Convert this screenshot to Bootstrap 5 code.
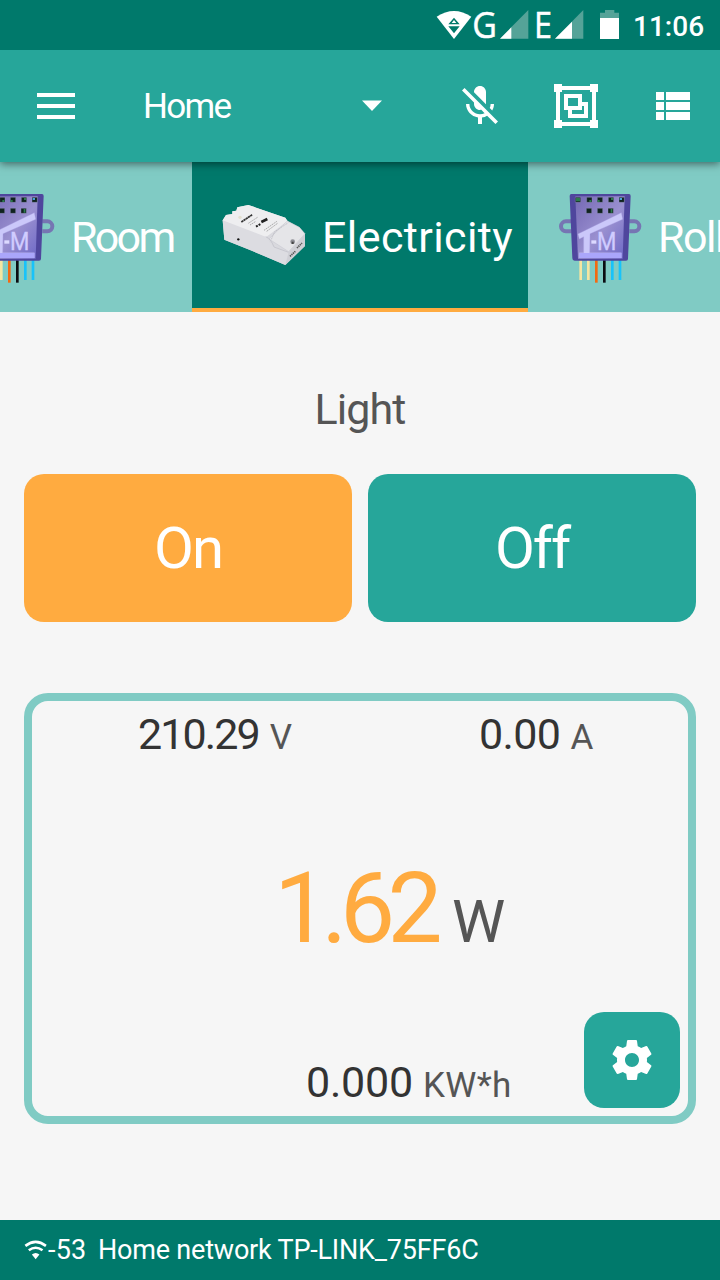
<!DOCTYPE html>
<html lang="en">
<head>
<meta charset="utf-8">
<meta name="viewport" content="width=device-width, initial-scale=1">
<title>Home</title>
<link href="https://cdn.jsdelivr.net/npm/bootstrap@5.3.0/dist/css/bootstrap.min.css" rel="stylesheet">
<style>
:root{--teal:#26a69a;--teal-dark:#00796b;--teal-light:#80cbc4;--amber:#ffab40}
body{width:720px;height:1280px;background:#f6f6f6;font-family:Roboto,"Open Sans",sans-serif;overflow:hidden;color:#555}
svg{display:block;flex:none}
.statusbar{height:50px;background:var(--teal-dark);z-index:3}
.clock{font-size:28px;font-weight:500;line-height:53px;letter-spacing:0;margin-left:13px;width:87px}
.appbar{height:112px;background:var(--teal);box-shadow:0 2px 8px rgba(0,0,0,.5);z-index:2;padding-left:37px}
.place{font-size:35px;line-height:112px;padding-top:2px;width:218px;margin-left:68px;letter-spacing:-1.7px}
.tabs{height:150px;background:var(--teal-light);font-size:43px;line-height:150px}
.tabs .tab-item{color:#fff;height:150px;overflow:hidden;white-space:nowrap;letter-spacing:-2.7px}
.tabs .tab-on{width:336px;background:var(--teal-dark);border-bottom:4px solid var(--amber);padding:4px 0 0 28px;letter-spacing:.4px}
.tab-side{width:192px}
.title{font-size:43px;line-height:60px;padding:67px 0 35px;margin:0;font-weight:400;letter-spacing:-.9px}
.btn.cmd{height:148px;border:0;border-radius:20px;color:#fff;font-size:58px;line-height:148px;padding:0;letter-spacing:-2px}
.btn.bg-amber{background:var(--amber)}
.btn.bg-teal{background:var(--teal)}
.meter{height:431px;margin-top:71px;border:8px solid var(--teal-light);border-radius:24px}
.val{font-size:43px;line-height:60px;color:#333;white-space:nowrap}
.val-v{letter-spacing:-1.9px}
.unit{font-size:35px;line-height:0;color:#555;letter-spacing:.3px;margin-left:10px}
.power{font-size:98px;line-height:120px;color:var(--amber);letter-spacing:-7.5px;padding-left:242px;margin-top:85px}
.power .unit{font-size:60px;margin-left:17px}
.gear{width:96px;height:96px;border-radius:20px;right:8px;bottom:8px}
.netbar{height:60px;background:var(--teal-dark);font-size:27px;line-height:60px;padding-left:24px;letter-spacing:-.2px;white-space:pre}
</style>
</head>
<body class="d-flex flex-column">
<svg width="0" height="0" class="position-absolute">
  <defs>
    <linearGradient id="shell" x1="0" y1="0" x2="1" y2="1"><stop offset="0" stop-color="#7468b4"/><stop offset=".55" stop-color="#9a90d0"/><stop offset="1" stop-color="#6d68c6"/></linearGradient>
    <symbol id="module" viewBox="54 96 252 276">
      <path d="M95 184H78a15 15 0 0 0 0 30H95M268 184h15a15 15 0 0 1 0 30h-15" fill="none" stroke="#7675b3" stroke-width="12"/>
      <g fill="none" stroke-width="8"><path d="M122 300v60M145 300v60" stroke="#f5e5a0"/><path d="M169 300v68" stroke="#f26a12"/><path d="M193 300v68" stroke="#0b0d12"/><path d="M217 300v60M240 300v60" stroke="#18c3fa"/></g>
      <path d="M94 102H267q5 0 5 6L264 296q0 6-6 6H104q-7 0-7-7L89 108q0-6 5-6z" fill="#4f469d"/>
      <path d="M106 109H254L248 296H114z" fill="url(#shell)"/>
      <g fill="#10231f" stroke="#a5a0cf" stroke-width="1"><path d="M106 112h16v15h-16zM140 112h16v15h-16zM172 112h16v15h-16zM205 112h16v15h-16zM237 112h16v15h-16zM139 145h16v15h-16zM172 145h16v15h-16zM204 145h16v15h-16z"/></g>
      <path d="M108 114h12v10h-12zM148 120h6v6h-6zM173 120h6v6h-6zM213 114h6v6h-6zM212 147h5v11h-5z" fill="#2c7a4c"/>
      <path d="M239 114h7v6h-7z" fill="#4aa3d8"/>
      <path d="M114 222 244 158 248 178 150 221 149 278H244V294H118V278H131V230L118 237z" fill="#cbc8fa" stroke="#b0a8ea" stroke-width="1"/>
      <path d="M118 279H244V294H118z" fill="#aaa6fb"/>
      <path d="M154 241h15v10h-15z" fill="#dcd9ff"/>
      <text x="171" y="270" font-size="77" textLength="58" lengthAdjust="spacingAndGlyphs" fill="#d0ccff" stroke="#d0ccff" style="letter-spacing:0">M</text>
    </symbol>
  </defs>
</svg>

<header class="statusbar d-flex align-items-start justify-content-end text-white position-relative">
  <svg width="190" height="50" viewBox="0 0 570 150">
    <path d="M20 50Q72 16 124 50L72 117z" fill="#fff"/>
    <path d="M55 73 72 53 89 73zM55 79H89L72 100z" fill="#00796b"/><path d="M65 69 72 60 79 69z" fill="#fff"/>
    <text x="127" y="113" font-family="Open Sans,Noto Sans" font-size="108" textLength="74" lengthAdjust="spacingAndGlyphs" fill="#fff" stroke="#fff" stroke-width="1.500">G</text>
    <path d="M210 116 295 30V116z" fill="#55a398"/><path d="M210 116 244 82V116z" fill="#fff"/>
    <text x="312" y="113" font-family="Open Sans,Noto Sans" font-size="108" textLength="54" lengthAdjust="spacingAndGlyphs" fill="#fff" stroke="#fff" stroke-width="1.500">E</text>
    <path d="M375 116 460 30V116z" fill="#55a398"/><path d="M375 116 426 65V116z" fill="#fff"/>
    <path d="M525 30h28v8h14v16H510V38h15z" fill="#55a398"/><path d="M510 54h57v63h-57z" fill="#fff"/>
  </svg>
  <div class="clock">11:06</div>
</header>

<nav class="appbar d-flex align-items-center position-relative text-white">
  <svg width="38" height="26" viewBox="0 0 38 26" fill="#fff"><path d="M0 0h38v4H0zM0 11h38v4H0zM0 22h38v4H0z"/></svg>
  <div class="place">Home</div>
  <svg width="22" height="12" viewBox="0 0 22 12" fill="#fff"><path d="M0 .5h20L10 11z" transform="translate(1)"/></svg>
  <svg class="ms-auto" width="48" height="48" viewBox="0 0 24 24" fill="#fff"><path d="M19 11h-1.700c0 .74-.16 1.430-.43 2.050l1.230 1.230c.56-.98.9-2.090.9-3.280zm-4.020.17c0-.06.02-.11.02-.17V5c0-1.660-1.340-3-3-3S9 3.340 9 5v.18l5.980 5.990zM4.270 3L3 4.270l6.010 6.010V11c0 1.660 1.330 3 2.990 3 .22 0 .44-.03.65-.08l1.660 1.660c-.71.33-1.500.52-2.310.52-2.760 0-5.300-2.100-5.300-5.100H5c0 3.410 2.720 6.230 6 6.720V21h2v-3.280c.91-.13 1.770-.45 2.540-.9L19.730 21 21 19.730 4.270 3z"/></svg>
  <svg style="margin:0 58px 0 50px" width="44" height="44" viewBox="0 0 44 44"><path d="M4 4h36v36H4z" fill="none" stroke="#fff" stroke-width="4"/><path d="M0 0h8v8H0zM36 0h8v8h-8zM0 36h8v8H0zM36 36h8v8h-8z" fill="#fff"/><path d="M12 12h14v12H12zM28 20h4v12H16V26" fill="none" stroke="#fff" stroke-width="4"/></svg>
  <svg style="margin-right:30px" width="34" height="28" viewBox="0 0 34 28" fill="#fff"><path d="M0 0h8v8H0zM10 0h24v8H10zM0 10h8v8H0zM10 10h24v8H10zM0 20h8v8H0zM10 20h24v8H10z"/></svg>
</nav>

<div class="tabs d-flex">
  <div class="tab-item tab-side d-flex align-items-center">
    <svg width="84" height="92" style="margin:2px 0 0 -29px"><use href="#module"/></svg>
    <span style="margin-left:16px">Room</span>
  </div>
  <div class="tab-item tab-on d-flex align-items-center">
    <svg width="88" height="68" viewBox="60 72 264 204">
      <path d="M68 124 78 108 97 105 97 97 109 95 112 85 145 78 256 116 263 127 298 145 315 166V201L256 258 150 213 73 182z" fill="#d9d9de"/>
      <path d="M68 124 78 108 97 105 97 97 109 95 112 85 145 78 256 116 262 126 220 158 197 175 70 128z" fill="#eeeef0"/>
      <path d="M262 126 298 145 315 164 266 218 207 180z" fill="#e5e5e8" stroke="#c5c5ce" stroke-width="1.500"/>
      <path d="M68 124 197 173 217 199 266 220 256 258 150 213 73 182z" fill="#dcdce1"/>
      <path d="M197 173Q213 179 222 204L266 220" fill="none" stroke="#bdbdc6" stroke-width="2"/>
      <path d="M266 220 315 166V201L256 258z" fill="#cfcfd5"/>
      <path d="M124 129 157 107" stroke="#333" stroke-width="5" stroke-dasharray="7 1"/>
      <path d="M184 129 202 120" stroke="#222" stroke-width="8"/>
      <path d="M145 133 174 114M150 138 166 128M192 154 232 126M200 157 234 132" stroke="#888" stroke-width="2" stroke-dasharray="5 2"/>
      <path d="M168 143 182 135" stroke="#222" stroke-width="6" stroke-dasharray="6 3"/>
      <path d="M214 181 224 158 265 131" fill="none" stroke="#b2b2ba" stroke-width="2" stroke-dasharray="4 2"/>
      <circle cx="120" cy="115" r="5" fill="#e3e0d0"/><circle cx="115" cy="181" r="3.500" fill="#111"/>
      <circle cx="278" cy="188" r="7" fill="#8d8d94"/><path d="M275 188h6v7h-6z" fill="#444"/>
      <path d="M270 232 286 217M291 207 306 192" stroke="#555" stroke-width="5" stroke-dasharray="4 2"/>
    </svg>
    <span style="margin-left:14px">Electricity</span>
  </div>
  <div class="tab-item tab-side d-flex align-items-center">
    <svg width="84" height="92" style="margin:2px 0 0 30px"><use href="#module"/></svg>
    <span style="margin-left:16px;letter-spacing:-1.500px">Roll</span>
  </div>
</div>

<main class="flex-grow-1 px-4">
  <h1 class="title text-center">Light</h1>
  <div class="d-flex gap-3">
    <button class="btn cmd bg-amber flex-fill w-50">On</button>
    <button class="btn cmd bg-teal flex-fill w-50">Off</button>
  </div>
  <section class="meter position-relative">
    <div class="d-flex" style="padding-top:3px">
      <div class="val val-v" style="width:341px;padding-left:106px">210.29<span class="unit" style="margin-left:11px">V</span></div>
      <div class="val" style="padding-left:106px;letter-spacing:-.6px">0.00<span class="unit">A</span></div>
    </div>
    <div class="val power">1.62<span class="unit">W</span></div>
    <div class="val" style="padding-left:274px;margin-top:83px;letter-spacing:-.2px">0.000<span class="unit">KW*h</span></div>
    <button class="btn bg-teal gear position-absolute d-flex align-items-center justify-content-center p-0 border-0" aria-label="Settings">
      <svg width="48" height="48" viewBox="0 0 24 24" fill="#fff"><path d="M19.430 12.980c.04-.32.07-.64.07-.98s-.03-.66-.07-.98l2.110-1.650c.19-.15.24-.42.12-.64l-2-3.460c-.12-.22-.39-.3-.61-.22l-2.490 1c-.52-.4-1.080-.73-1.690-.98l-.38-2.650C14.460 2.180 14.250 2 14 2h-4c-.25 0-.46.18-.49.42l-.38 2.650c-.61.25-1.170.59-1.690.98l-2.490-1c-.23-.09-.49 0-.61.22l-2 3.460c-.13.22-.07.49.12.64l2.110 1.650c-.04.32-.07.65-.07.98s.03.66.07.98l-2.110 1.650c-.19.15-.24.42-.12.64l2 3.460c.12.22.39.3.61.22l2.490-1c.52.4 1.080.73 1.690.98l.38 2.650c.03.24.24.42.49.42h4c.25 0 .46-.18.49-.42l.38-2.650c.61-.25 1.170-.59 1.690-.98l2.490 1c.23.09.49 0 .61-.22l2-3.460c.12-.22.07-.49-.12-.64l-2.110-1.650zM12 15.500c-1.930 0-3.500-1.570-3.500-3.500s1.570-3.500 3.500-3.500 3.500 1.570 3.500 3.500-1.570 3.500-3.500 3.500z"/></svg>
    </button>
  </section>
</main>

<footer class="netbar d-flex align-items-center text-white"><svg width="24" height="20" viewBox="74 76 70 58"><path d="M78 93Q108 70 138 93M88 106Q108 91 128 106" fill="none" stroke="#fff" stroke-width="7.500"/><path d="M97 118Q108 109 119 118L108 132z" fill="#fff"/></svg><span style="width:50px;letter-spacing:.2px">-53</span><span>Home network TP-LINK_75FF6C</span></footer>
<script src="https://cdn.jsdelivr.net/npm/bootstrap@5.3.0/dist/js/bootstrap.bundle.min.js"></script>
</body>
</html>
